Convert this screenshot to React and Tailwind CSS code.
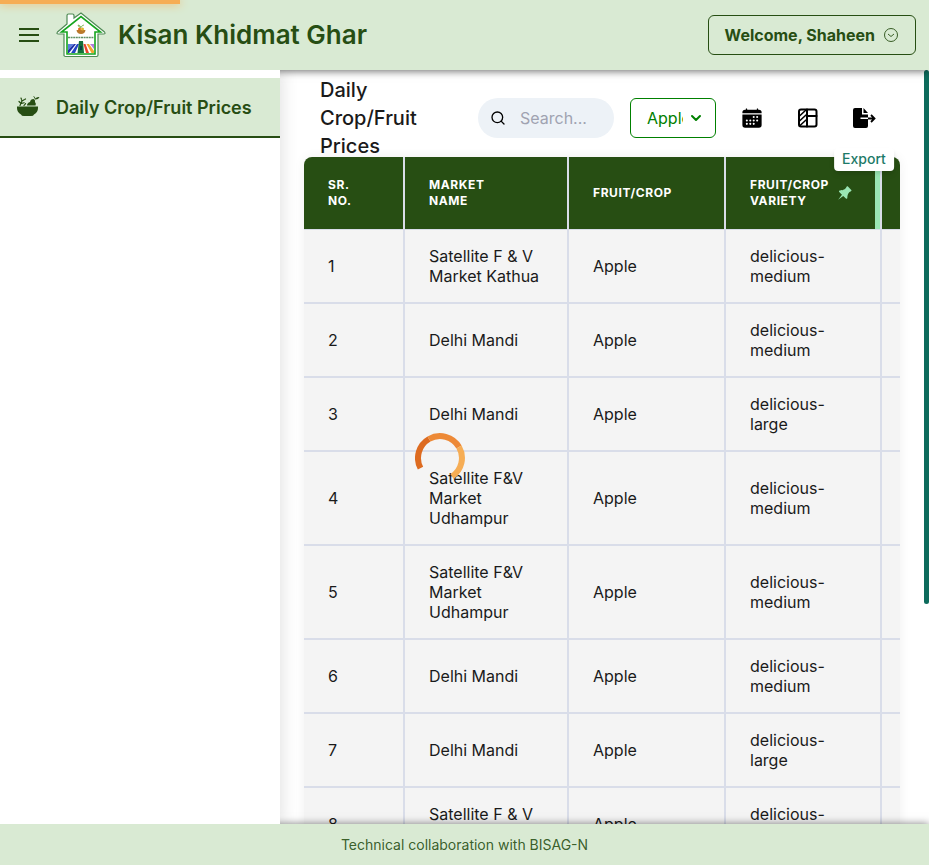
import { IoCalendar } from "react-icons/io5";
import { TiPin } from "react-icons/ti";
import { FiSearch, FiChevronDown } from "react-icons/fi";

const rows = [
  ["1", "Satellite F & V Market Kathua", "Apple", "delicious-medium"],
  ["2", "Delhi Mandi", "Apple", "delicious-medium"],
  ["3", "Delhi Mandi", "Apple", "delicious-large"],
  ["4", "Satellite F&V Market Udhampur", "Apple", "delicious-medium"],
  ["5", "Satellite F&V Market Udhampur", "Apple", "delicious-medium"],
  ["6", "Delhi Mandi", "Apple", "delicious-medium"],
  ["7", "Delhi Mandi", "Apple", "delicious-large"],
  ["8", "Satellite F & V Market Kathua", "Apple", "delicious-medium"],
];

function Logo() {
  return (
    <svg viewBox="0 0 50 46" className="h-[46px] w-[50px]" aria-hidden="true">
      <path
        d="M8 44V22H2.500Q0 22 1.500 20L11 12V3.500Q11 2 12.500 2H16.500Q18 2 18 3.500V6L25 1L48.500 20Q50 22 47.500 22H42V43Q42 44.500 40.500 44.500H9.500Q8 44.500 8 43Z"
        fill="#fff"
        stroke="#4f8a55"
        strokeWidth="1.200"
      />
      <path
        d="M11 42V20H5.500L25 4.500L44.500 20H39V42Z"
        fill="#fff"
        stroke="#16a51f"
        strokeWidth="1.600"
      />
      <path d="M20.500 18H29.500Q29 22 25 22T20.500 18Z" fill="#b9792d" />
      <circle cx="23.500" cy="17" r="1.500" fill="#e46b1c" />
      <circle cx="26.500" cy="17" r="1.500" fill="#e0b52b" />
      <path d="M25 15.500Q22 15 22 13Q24 13 25 15.500Q26 13 28 13" fill="none" stroke="#6ba83a" strokeWidth=".8" />
      <path d="M12 25.500H38" stroke="#5f9064" strokeWidth="1.600" strokeDasharray="2 .6" />
      <path d="M12 32H18L12 38Z" fill="#5b7fe0" />
      <path d="M18 32H20L13 41H12V38Z" fill="#1f2fa8" />
      <path d="M21 32H23L19 41H15Z" fill="#2443c4" />
      <path d="M23 29H27L28 41H21.500Z" fill="#14703a" />
      <path d="M27.500 32H29.500L33 41H30Z" fill="#e8452c" />
      <path d="M30.500 32H33L38 39V41H35.500Z" fill="#f2a530" />
      <path d="M34 32H38V37Z" fill="#b37be0" />
      <path d="M24 34H26V38H24Z" fill="#0c3f4a" />
    </svg>
  );
}

function FruitBowlIcon() {
  return (
    <svg viewBox="0 0 24 24" className="size-6" fill="currentColor" aria-hidden="true">
      <path d="M1 11.500H22V13Q22 17 18 19.500Q17.500 21 15 21H8Q5.500 21 5 19.500Q1 17 1 13Z" />
      <path d="M11 10.500Q11 8 14 7Q14.500 4 17.500 4Q19.500 4.500 19 7Q20.500 8.500 19.500 10.500Z" />
      <path d="M19 4.500Q18.500 2.500 17 1Q19 1 19.500 3.500Q20.500 1.500 23.500 2Q22.500 4.500 19.500 4.500Z" />
      <path
        d="M4 10.500L6 6L5 3M6 6L9.500 4M3 6.500L5 8.500L9 7.500M8 10.500L10 8"
        fill="none"
        stroke="currentColor"
        strokeWidth="1.200"
        strokeLinecap="round"
        strokeDasharray="2.500 1"
      />
    </svg>
  );
}

function ColumnsIcon() {
  return (
    <svg
      viewBox="0 0 24 24"
      className="size-6"
      fill="none"
      stroke="currentColor"
      strokeWidth="2"
      strokeLinecap="round"
      aria-hidden="true"
    >
      <rect x="3" y="3.500" width="17.500" height="17" rx="2" />
      <path d="M11 3.500V20.500M11 10H20.500" />
      <path d="M3.500 10L10 4M3.500 15L10 9M3.500 20L10 14" strokeWidth="1.600" />
    </svg>
  );
}

function ExportIcon() {
  return (
    <svg viewBox="0 0 24 24" className="size-6" aria-hidden="true">
      <path
        d="M3 2H10V8.500H16V11.500H8.500V13H16V20Q16 22 14 22H3Q1 22 1 20V4Q1 2 3 2Z"
        fill="currentColor"
      />
      <path d="M11.500 2L16 7H11.500Z" fill="currentColor" />
      <path d="M16 12.500H22M19 9L22.500 12.500L19 16" fill="none" stroke="currentColor" strokeWidth="1.800" />
    </svg>
  );
}

function Header() {
  return (
    <header className="relative z-20 flex h-[70px] shrink-0 items-center bg-[#d9ead3] pl-4 pr-[13px] text-[#274e13] shadow-[0_1px_8px_rgba(0,0,0,0.6)]">
      <button type="button" aria-label="Toggle menu" className="flex size-[26px] items-center justify-center">
        <svg viewBox="0 0 20 14" className="h-[14px] w-5" aria-hidden="true">
          <path d="M0 1H20M0 7H20M0 13H20" stroke="currentColor" strokeWidth="2" />
        </svg>
      </button>
      <div className="ml-[14px] flex items-center gap-3">
        <Logo />
        <h1 className="text-[26px] font-semibold leading-8">Kisan Khidmat Ghar</h1>
      </div>
      <button
        type="button"
        className="ml-auto flex h-10 items-center gap-2 rounded-md border border-[#274e13] px-4 font-bold"
      >
        Welcome, Shaheen
        <svg viewBox="0 0 16 16" className="size-4" fill="none" stroke="currentColor" strokeWidth=".9" aria-hidden="true">
          <circle cx="8" cy="8" r="6.500" />
          <path d="M5 7L8 9.500L11 7" />
        </svg>
      </button>
    </header>
  );
}

function Sidebar() {
  return (
    <nav className="relative z-30 w-[280px] shrink-0 bg-white pt-2 shadow-[2px_0_16px_rgba(0,0,0,0.12)] [clip-path:inset(0_-24px_0_0)]">
      <a
        href="#prices"
        className="flex h-[60px] items-center gap-4 border-b-2 border-[#274e13] bg-[#d9ead3] px-4 text-lg font-semibold text-[#274e13]"
      >
        <FruitBowlIcon />
        <span className="pt-0.5">Daily Crop/Fruit Prices</span>
      </a>
    </nav>
  );
}

function Toolbar() {
  return (
    <div className="flex h-[87px] items-center gap-4 px-4 pt-2">
      <h2 className="flex-1 text-xl font-medium leading-7 text-[#1a1a1a]">Daily Crop/Fruit Prices</h2>
      <label className="flex h-10 w-[136px] items-center gap-[14px] rounded-full bg-[#edf2f7] pl-3 pr-4">
        <FiSearch className="size-4 shrink-0 text-black" />
        <input
          type="text"
          aria-label="Search"
          placeholder="Search..."
          className="w-full min-w-0 bg-transparent outline-none placeholder:text-[#a0a3b1]"
        />
      </label>
      <div className="relative w-[86px]">
        <select
          aria-label="Crop"
          className="h-10 w-full appearance-none rounded-md border border-[#008000] bg-white pl-4 pr-8 text-[#008000]"
        >
          <option>Apple</option>
        </select>
        <FiChevronDown
          strokeWidth={3}
          className="pointer-events-none absolute right-3 top-3 size-4 text-[#008000]"
        />
      </div>
      <button type="button" aria-label="Calendar" className="flex size-10 items-center justify-center">
        <IoCalendar className="size-[22px]" />
      </button>
      <button type="button" aria-label="Columns" className="flex size-10 items-center justify-center">
        <ColumnsIcon />
      </button>
      <div className="relative">
        <button type="button" aria-label="Export" className="flex size-10 items-center justify-center">
          <ExportIcon />
        </button>
        <span
          role="tooltip"
          className="absolute left-1/2 top-[50px] z-10 -translate-x-1/2 rounded-sm bg-white px-2 pb-0.5 text-sm font-medium leading-[21px] text-[#1d7a68] shadow-md"
        >
          Export
        </span>
      </div>
    </div>
  );
}

const headCell =
  "h-[73px] border-b border-r-2 border-[#d9dde9] bg-[#274e13] px-6 text-left text-xs font-bold uppercase leading-4 tracking-wider text-white";
const bodyCell = "border-b-2 border-r-2 border-[#d9dde9] px-6 py-4 leading-5";

function PriceTable() {
  return (
    <div className="overflow-hidden rounded-t-lg shadow-[0_0_12px_rgba(0,0,0,0.06)]">
      <table className="w-[800px] table-fixed border-separate border-spacing-0 bg-[#f4f4f4] text-[#1a1a1a]">
        <colgroup>
          <col className="w-[101px]" />
          <col className="w-[164px]" />
          <col className="w-[157px]" />
          <col className="w-[156px]" />
          <col />
        </colgroup>
        <thead>
          <tr>
            <th className={headCell}>
              Sr.
              <br />
              No.
            </th>
            <th className={headCell}>
              Market
              <br />
              Name
            </th>
            <th className={headCell}>Fruit/Crop</th>
            <th className={`${headCell} relative`}>
              <span className="flex items-center gap-1">
                <span className="w-20">Fruit/Crop Variety</span>
                <TiPin className="size-5 shrink-0 text-[#9ae6b4]" />
              </span>
              <span className="absolute inset-y-0 right-0 w-[5px] bg-[#9ae6b4]" />
            </th>
            <th className={headCell} aria-label="Price" />
          </tr>
        </thead>
        <tbody>
          {rows.map((row) => (
            <tr key={row[0]}>
              {row.map((cell, i) => (
                <td key={i} className={bodyCell}>
                  {cell}
                </td>
              ))}
              <td className={bodyCell} />
            </tr>
          ))}
        </tbody>
      </table>
    </div>
  );
}

function Spinner() {
  return (
    <svg
      viewBox="-25 -25 50 50"
      className="absolute left-[135px] top-[363px] size-[50px]"
      fill="none"
      strokeWidth="6"
      role="img"
      aria-label="Loading"
    >
      <path d="M-19.500 10.200A22 22 0 0 1 -11 -19" stroke="#dd6b20" />
      <path d="M-11 -19A22 22 0 0 1 19 -11" stroke="#ed8936" />
      <path d="M19 -11A22 22 0 0 1 12 18.400" stroke="#f6ad55" />
    </svg>
  );
}

export default function App() {
  return (
    <div className="relative flex h-screen flex-col overflow-hidden bg-white font-['Inter',sans-serif]">
      <div
        className="absolute left-0 top-0 z-40 h-1 bg-[#f6ad55] shadow-[0_0_10px_#f6ad55]"
        style={{ width: "19.4%" }}
      />
      <Header />
      <div className="flex min-h-0 flex-1">
        <Sidebar />
        <main className="relative min-w-0 flex-1 overflow-hidden pl-6 pr-[29px]">
          <Toolbar />
          <PriceTable />
          <Spinner />
          <div className="absolute right-0 top-0 h-[534px] w-[5px] rounded-sm bg-[#0d6b5c]" />
        </main>
      </div>
      <footer className="relative z-20 flex h-[41px] shrink-0 items-center justify-center bg-[#d9ead3] text-sm text-[#274e13]/90 shadow-[0_0_8px_rgba(0,0,0,0.5)]">
        Technical collaboration with BISAG-N
      </footer>
    </div>
  );
}
